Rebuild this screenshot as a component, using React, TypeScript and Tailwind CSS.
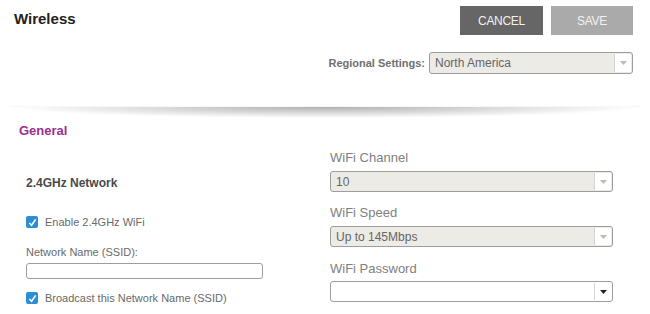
import React from 'react';

const CheckBox: React.FC<{ label: string }> = ({ label }) => (
  <label className="flex items-center h-[14px] gap-[7px] text-[11px] leading-[14px] text-[#6a6a6a]">
    <span className="w-[12px] h-[12px] rounded-[2px] bg-[#2b8fd6] flex items-center justify-center">
      <svg width="9" height="9" viewBox="0 0 10 10">
        <path d="M1.5 5.5 L4 8 L8.5 1.5" fill="none" stroke="#fff" strokeWidth="1.8" />
      </svg>
    </span>
    {label}
  </label>
);

interface SelectBoxProps {
  value: string;
  disabled?: boolean;
  className?: string;
}

const SelectBox: React.FC<SelectBoxProps> = ({ value, disabled = true, className = '' }) => (
  <div
    className={`flex items-stretch border border-[#9d9d9d] rounded-[3px] ${
      disabled ? 'bg-[#ecebe5]' : 'bg-white'
    } ${className}`}
  >
    <span className="flex-1 flex items-center pl-[5px] text-[12px] text-[#666]">{value}</span>
    <span className="w-[17px] my-[1px] mr-[1px] border-l border-[#d4d4d4] bg-white flex items-center justify-center">
      <svg width="7" height="4" viewBox="0 0 7 4">
        <path d="M0 0 L7 0 L3.5 4 Z" fill={disabled ? '#bbb' : '#222'} />
      </svg>
    </span>
  </div>
);

const App: React.FC = () => {
  return (
    <div className="w-[650px] h-[314px] bg-white overflow-hidden font-['Liberation_Sans',Arial,sans-serif]">
      {/* Header */}
      <div className="h-[106px] flex flex-col">
        <div className="flex justify-between items-start pt-[6px] pl-[14px] pr-[17px]">
          <h1 className="text-[15px] font-bold text-[#222] leading-[20px] pt-[3px]">Wireless</h1>
          <div className="flex gap-[8px]">
            <button className="w-[83px] h-[29px] bg-[#666] text-[#f2f2f2] text-[12px] tracking-[-0.3px]">
              CANCEL
            </button>
            <button className="w-[82px] h-[29px] bg-[#aaa] text-[#f2f2f2] text-[12px] tracking-[-0.3px]">
              SAVE
            </button>
          </div>
        </div>
        <div className="flex justify-end items-center gap-[4px] pr-[17px] mt-[17px]">
          <span className="text-[11px] font-bold text-[#707070]">Regional Settings:</span>
          <SelectBox value="North America" className="w-[204px] h-[22px]" />
        </div>
      </div>

      {/* Divider shadow */}
      <div className="mx-[10px] h-[12px] border-t border-[#f7f7f7] bg-[radial-gradient(ellipse_50%_100%_at_50%_0%,#b0b0b0,rgba(255,255,255,0)_100%)]" />

      <h2 className="pl-[19px] text-[13px] font-bold leading-[26px] text-[#9c2f90]">General</h2>

      <div className="grid grid-cols-[304px_283px] pl-[26px]">
        {/* Left column */}
        <div className="flex flex-col">
          <h3 className="mt-[31px] text-[12px] font-bold leading-[16px] text-[#4a4a4a]">2.4GHz Network</h3>
          <div className="mt-[24px]">
            <CheckBox label="Enable 2.4GHz WiFi" />
          </div>
          <span className="mt-[16px] text-[11px] leading-[14px] text-[#6a6a6a]">Network Name (SSID):</span>
          <input
            type="text"
            className="mt-[4px] w-[237px] h-[16px] border border-[#9d9d9d] rounded-[3px] bg-white outline-none"
          />
          <div className="mt-[12px]">
            <CheckBox label="Broadcast this Network Name (SSID)" />
          </div>
        </div>

        {/* Right column */}
        <div className="flex flex-col">
          <span className="mt-[6px] text-[13px] leading-[16px] text-[#808080]">WiFi Channel</span>
          <SelectBox value="10" className="mt-[5px] h-[21px]" />
          <span className="mt-[13px] text-[13px] leading-[16px] text-[#808080]">WiFi Speed</span>
          <SelectBox value="Up to 145Mbps" className="mt-[5px] h-[21px]" />
          <span className="mt-[14px] text-[13px] leading-[16px] text-[#808080]">WiFi Password</span>
          <SelectBox value="" disabled={false} className="mt-[4px] h-[21px]" />
        </div>
      </div>
    </div>
  );
};

export default App;
